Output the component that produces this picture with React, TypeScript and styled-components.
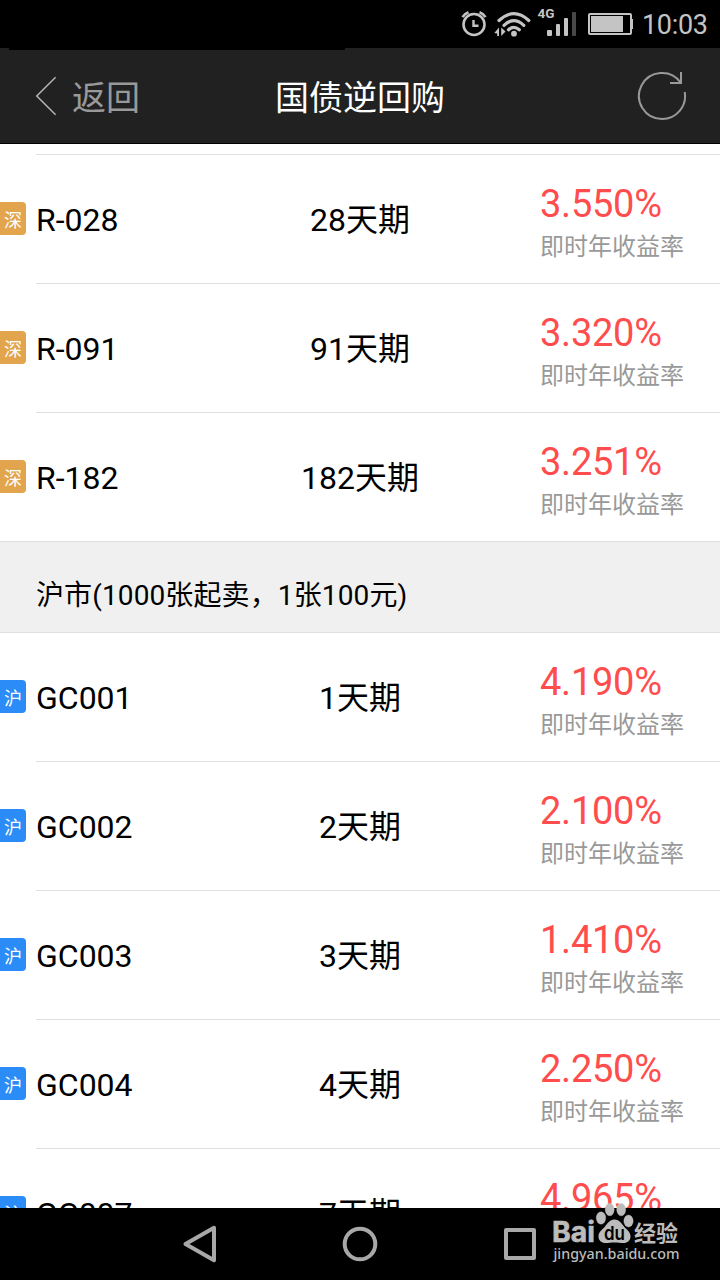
import React from 'react';
import styled, { createGlobalStyle } from 'styled-components';

const GlobalStyle = createGlobalStyle`
  * { box-sizing: border-box; }
  body { margin: 0; background: #fff; }
`;

const Screen = styled.div`
  position: relative;
  display: flex;
  flex-direction: column;
  width: 720px;
  height: 1280px;
  overflow: hidden;
  background: #fff;
  color: #000;
  font-family: Roboto, 'Noto Sans CJK SC', sans-serif;
`;

const StatusBar = styled.div`
  display: flex;
  justify-content: flex-end;
  flex: none;
  height: 48px;
  padding-right: 13px;
  background: #000;
  color: #c4c4c4;
`;

const Clock = styled.span`
  font-size: 27px;
  letter-spacing: -0.3px;
  line-height: 50px;
  width: 65px;
  white-space: nowrap;
`;

const TitleBar = styled.header`
  display: grid;
  grid-template-columns: 180px 1fr 180px;
  align-items: center;
  flex: none;
  height: 96px;
  background: #212121;
  border-bottom: 1px solid #000;
`;

const TopEdge = styled.div`
  position: absolute;
  left: 9px;
  top: 48px;
  width: 336px;
  height: 2px;
  background: #000;
`;

const Back = styled.div`
  display: flex;
  align-items: center;
  gap: 15px;
  padding-left: 35px;
  color: #999;
  font-size: 34px;
  line-height: 50px;
`;

const BackLabel = styled.span`
  padding-top: 5px;
`;

const Title = styled.h1`
  margin: 0;
  padding-top: 5px;
  text-align: center;
  color: #fff;
  font-size: 34px;
  font-weight: 400;
  line-height: 50px;
`;

const Refresh = styled.div`
  display: flex;
  justify-content: flex-end;
  padding: 1px 32px 0 0;
`;

const List = styled.main`
  flex: 1;
  min-height: 0;
  overflow: hidden;
  padding-top: 10px;
`;

const Row = styled.div<{ $first?: boolean }>`
  display: grid;
  grid-template-columns: 36px 234px 180px 1fr;
  align-items: center;
  height: 129px;
  background: linear-gradient(#e0e0e0, #e0e0e0) ${(p) => (p.$first ? '0' : '36px')} 0 / 100% 1px no-repeat;
`;

const Badge = styled.span<{ $color: string }>`
  width: 26px;
  height: 33px;
  padding-left: 4px;
  border-radius: 0 4px 4px 0;
  background: ${(p) => p.$color};
  color: #fff;
  font-size: 18px;
  line-height: 37px;
  white-space: nowrap;
`;

const Code = styled.span`
  font-size: 32px;
  line-height: 48px;
  padding-top: 3px;
`;

const Term = styled(Code)`
  text-align: center;
`;

const Yield = styled.div`
  display: flex;
  flex-direction: column;
  padding: 14px 0 0 90px;
`;

const Rate = styled.span`
  color: #ff4c4c;
  font-size: 38px;
  letter-spacing: -0.25px;
  line-height: 42px;
`;

const Caption = styled.span`
  color: #999;
  font-size: 24px;
  line-height: 44px;
  white-space: nowrap;
`;

const Section = styled.div`
  height: 91px;
  padding: 8px 36px 0;
  border-top: 1px solid #e0e0e0;
  background: #f0f0f0;
  font-size: 28px;
  letter-spacing: 0.12px;
  line-height: 91px;
`;

const NavBar = styled.nav`
  display: flex;
  justify-content: center;
  align-items: center;
  gap: 120px;
  flex: none;
  height: 72px;
  background: #000;
`;

const Watermark = styled.div`
  position: absolute;
  left: 550px;
  top: 1200px;
  width: 134px;
  height: 70px;
`;

function StatusIcons() {
  return (
    <svg width="195" height="48" viewBox="447 0 195 48" fill="none" stroke="#c4c4c4">
      <circle cx="474" cy="24.500" r="10.500" strokeWidth="2.600" />
      <path d="M473.500 20v5.800h5" strokeWidth="2.400" />
      <path d="M462.500 17.200q2-3.600 6-5M485.500 17.200q-2-3.600-6-5" strokeWidth="2.600" />
      <g strokeWidth="3.200" strokeLinecap="round">
        <path d="M499 20.500Q513.800 6.800 528.800 20.500" />
        <path d="M504 25.300Q513.800 16 523.800 25.300" />
        <path d="M508.500 29.800Q513.800 25 519.300 29.800" />
      </g>
      <path d="M493 26h8l6 5v7h-14z" fill="#000" stroke="none" />
      <circle cx="514" cy="33.700" r="2.900" fill="#c4c4c4" stroke="none" />
      <path d="M494.300 33l4.700-5.500V36h-1.800v-2.500zM505.500 31.500L501.200 36v-8.500z" fill="#c4c4c4" stroke="none" />
      <text x="537.500" y="18" fill="#c4c4c4" stroke="none" fontFamily="Roboto, sans-serif" fontWeight="700" fontSize="13.500">4G</text>
      <g fill="#c4c4c4" stroke="none">
        <rect x="547" y="30" width="5" height="6" rx="1" />
        <rect x="556" y="24" width="4" height="12" rx="1" />
        <rect x="564" y="18" width="4" height="18" rx="1" />
        <rect x="572" y="12" width="4" height="24" rx="1" fill="#484848" />
        <rect x="591" y="16" width="32" height="16" />
        <path d="M631 19h2v10h-2z" />
      </g>
      <rect x="589" y="14" width="42" height="20" rx="1" strokeWidth="2" />
    </svg>
  );
}

function BackArrow() {
  return (
    <svg width="22" height="40" viewBox="35 76 22 40" fill="none" stroke="#b0b0b0" strokeWidth="1.600">
      <path d="M55.600 77.300L36.800 96l18.800 18.700" />
    </svg>
  );
}

function RefreshIcon() {
  return (
    <svg width="52" height="52" viewBox="636 70 52 52" fill="none" stroke="#999" strokeWidth="2">
      <path d="M684.700 92A23 23 0 0 1 662 119A23 23 0 1 1 680.600 82.500" />
      <path d="M681 72v11h-11" />
    </svg>
  );
}

function NavIcons() {
  return (
    <>
      <svg width="40" height="40" viewBox="180 1224 40 40" fill="none" stroke="#a8a8a8" strokeWidth="4" strokeLinejoin="round">
        <path d="M214 1227.700L185.500 1244l28.500 16.300z" />
      </svg>
      <svg width="40" height="40" viewBox="340 1224 40 40" fill="none" stroke="#a8a8a8" strokeWidth="4">
        <circle cx="360" cy="1244" r="15.300" />
      </svg>
      <svg width="40" height="40" viewBox="500 1224 40 40" fill="none" stroke="#a8a8a8" strokeWidth="4" strokeLinejoin="round">
        <rect x="506" y="1230" width="28" height="28" />
      </svg>
    </>
  );
}

function BaiduMark() {
  return (
    <svg width="134" height="70" viewBox="550 1200 134 70" fill="#bcbcbc">
      <text x="552" y="1242" fontFamily="Inter, sans-serif" fontWeight="700" fontSize="28" textLength="43" lengthAdjust="spacingAndGlyphs" stroke="#bcbcbc" strokeWidth=".6">Bai</text>
      <g stroke="#e8dcdc" strokeOpacity=".35" strokeWidth=".8">
        <ellipse cx="601" cy="1218" rx="4.700" ry="6.200" />
        <ellipse cx="609.700" cy="1209.500" rx="4.500" ry="6.300" />
        <ellipse cx="621.200" cy="1209.500" rx="4.500" ry="6.300" />
        <ellipse cx="628.500" cy="1221" rx="4.700" ry="6" />
      </g>
      <path d="M614.500 1219.500c-5 0-7 4-9.500 7-3.500 4-6.500 5.500-6.500 10 0 4 3 6.500 7 6.500 3 0 5.500-.5 9-.5s6 .5 9 .5c4 0 7-2.500 7-6.500 0-4.500-3-6-6.500-10-2.500-3-4.500-7-9.500-7z" />
      <text x="604" y="1239.800" fill="#000" fontFamily="Inter, sans-serif" fontWeight="600" fontSize="19" textLength="21" lengthAdjust="spacingAndGlyphs">du</text>
      <text x="634" y="1240.500" fontFamily="'Noto Sans CJK SC', sans-serif" fontWeight="700" fontSize="22" textLength="44" lengthAdjust="spacingAndGlyphs">经验</text>
      <text x="553.500" y="1259" fontFamily="'Noto Sans', sans-serif" fontWeight="500" fontSize="15" textLength="126" lengthAdjust="spacingAndGlyphs">jingyan.baidu.com</text>
    </svg>
  );
}

interface Repo {
  code: string;
  days: number;
  rate: string;
}

const shenzhen: Repo[] = [
  { code: 'R-028', days: 28, rate: '3.550%' },
  { code: 'R-091', days: 91, rate: '3.320%' },
  { code: 'R-182', days: 182, rate: '3.251%' },
];

const shanghai: Repo[] = [
  { code: 'GC001', days: 1, rate: '4.190%' },
  { code: 'GC002', days: 2, rate: '2.100%' },
  { code: 'GC003', days: 3, rate: '1.410%' },
  { code: 'GC004', days: 4, rate: '2.250%' },
  { code: 'GC007', days: 7, rate: '4.965%' },
];

function RepoRow({ repo, market, color, first }: { repo: Repo; market: string; color: string; first?: boolean }) {
  return (
    <Row $first={first}>
      <Badge $color={color}>{market}</Badge>
      <Code>{repo.code}</Code>
      <Term>{repo.days}天期</Term>
      <Yield>
        <Rate>{repo.rate}</Rate>
        <Caption>即时年收益率</Caption>
      </Yield>
    </Row>
  );
}

export default function App() {
  return (
    <Screen>
      <GlobalStyle />
      <StatusBar>
        <StatusIcons />
        <Clock>10:03</Clock>
      </StatusBar>
      <TitleBar>
        <Back>
          <BackArrow />
          <BackLabel>返回</BackLabel>
        </Back>
        <Title>国债逆回购</Title>
        <Refresh>
          <RefreshIcon />
        </Refresh>
      </TitleBar>
      <TopEdge />
      <List>
        {shenzhen.map((r) => (
          <RepoRow key={r.code} repo={r} market="深" color="#e2a54e" />
        ))}
        <Section>沪市(1000张起卖，1张100元)</Section>
        {shanghai.map((r, i) => (
          <RepoRow key={r.code} repo={r} market="沪" color="#2b8cf7" first={i === 0} />
        ))}
      </List>
      <NavBar>
        <NavIcons />
      </NavBar>
      <Watermark>
        <BaiduMark />
      </Watermark>
    </Screen>
  );
}
